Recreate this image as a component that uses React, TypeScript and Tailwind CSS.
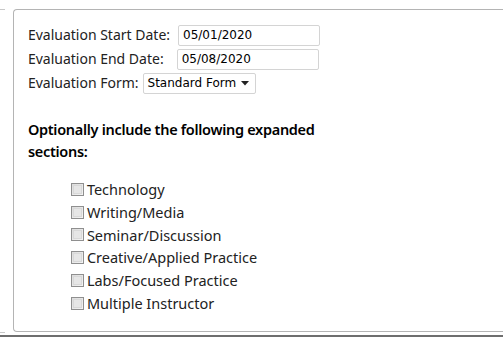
import React from "react";

const sections = [
  "Technology",
  "Writing/Media",
  "Seminar/Discussion",
  "Creative/Applied Practice",
  "Labs/Focused Practice",
  "Multiple Instructor",
];

export default function App() {
  return (
    <div
      className="w-[503px] h-[339px] overflow-hidden bg-white text-[#222]"
      style={{ fontFamily: '"Segoe UI", "Noto Sans", "Open Sans", sans-serif' }}
    >
      <div className="flex pt-[9px]">
        <div className="w-[5px] flex flex-col justify-between">
          <div className="h-px bg-[#c8c8c8]" />
          <div className="h-px bg-[#c8c8c8] mb-[-1px]" />
        </div>
        <div className="ml-[8px] w-[500px] h-[323px] border border-r-0 border-[#b4b4b4] rounded-l-[4px] pl-[14px] pt-[14px]">
          <div className="flex flex-col gap-[2px] text-[14px] leading-[22px]">
            <div className="flex items-center h-[22px]">
              <span>Evaluation Start Date:</span>
              <input
                readOnly
                value="05/01/2020"
                className="ml-[8px] w-[142px] h-[21px] border border-[#d4d4d4] rounded-[2px] px-[4px] text-[12px] text-black outline-none"
                style={{ fontFamily: 'Tahoma, "DejaVu Sans", sans-serif' }}
              />
            </div>
            <div className="flex items-center h-[22px]">
              <span>Evaluation End Date:</span>
              <input
                readOnly
                value="05/08/2020"
                className="ml-[13px] w-[142px] h-[21px] border border-[#d4d4d4] rounded-[2px] px-[4px] text-[12px] text-black outline-none"
                style={{ fontFamily: 'Tahoma, "DejaVu Sans", sans-serif' }}
              />
            </div>
            <div className="flex items-center h-[22px]">
              <span>Evaluation Form:</span>
              <div
                className="ml-[4px] w-[113px] h-[21px] border border-[#d4d4d4] rounded-[2px] flex items-center justify-between pl-[4px] pr-[6px] text-[12px] text-black"
                style={{ fontFamily: 'Tahoma, "DejaVu Sans", sans-serif' }}
              >
                <span>Standard Form</span>
                <svg width="8" height="5" viewBox="0 0 8 5">
                  <path d="M0 0h8L4 4.5z" fill="#222" />
                </svg>
              </div>
            </div>
          </div>

          <p className="mt-[24px] w-[310px] text-[14.5px] leading-[22px] font-semibold tracking-[-0.3px] text-black">
            Optionally include the following expanded sections:
          </p>

          <ul className="mt-[16px] ml-[43px] flex flex-col text-[14.5px] leading-[22.8px]">
            {sections.map((s) => (
              <li key={s} className="flex items-center h-[22.8px]">
                <span className="w-[13px] h-[13px] border border-[#8f8f8f] bg-gradient-to-br from-[#dcdcdc] to-[#f4f4f4] p-[1px]">
                  <span className="block w-full h-full border border-[#d8d8d8] bg-[#e6e6e6]" />
                </span>
                <span className="ml-[3px]">{s}</span>
              </li>
            ))}
          </ul>
        </div>
      </div>
      <div className="mt-[3px] h-[2px] bg-[#6e6e6e]" />
    </div>
  );
}
